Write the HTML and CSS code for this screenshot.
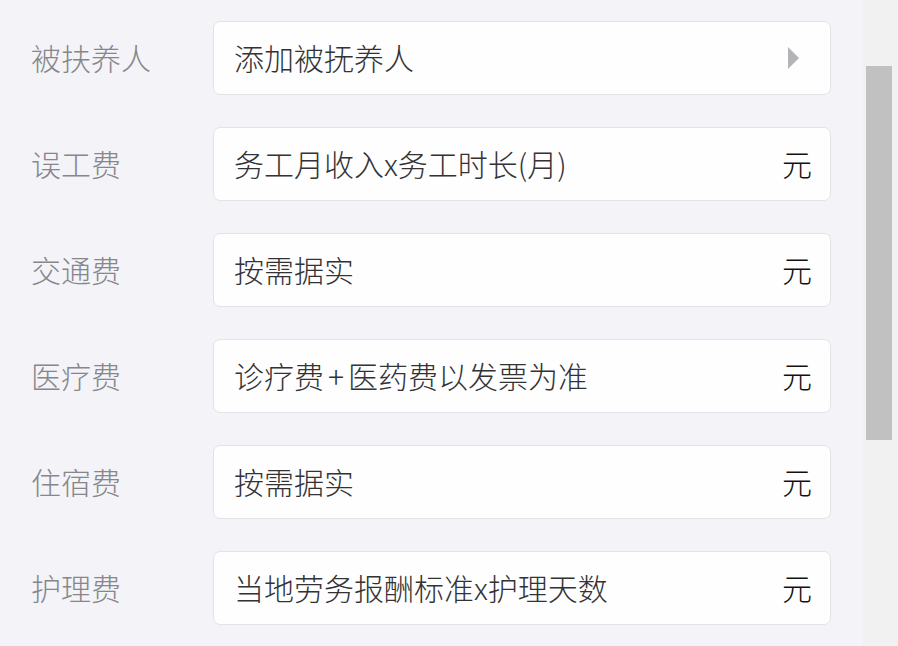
FILE: index.html
```html
<!DOCTYPE html>
<html lang="zh-CN">
<head>
<meta charset="utf-8">
<title>费用</title>
<link rel="stylesheet" href="styles.css">
</head>
<body>
<div class="page">
  <div class="form">
    <div class="row">
      <div class="label">被扶养人</div>
      <div class="field">
        <span class="value">添加被抚养人</span>
        <svg class="arrow" width="11" height="22" viewBox="0 0 11 22"><polygon points="0,0 11,11 0,22" fill="#b4b4b8"/></svg>
      </div>
    </div>
    <div class="row">
      <div class="label">误工费</div>
      <div class="field"><span class="value">务工月收入x务工时长(月)</span><span class="unit">元</span></div>
    </div>
    <div class="row">
      <div class="label">交通费</div>
      <div class="field"><span class="value">按需据实</span><span class="unit">元</span></div>
    </div>
    <div class="row">
      <div class="label">医疗费</div>
      <div class="field"><span class="value">诊疗费<span class="op">+</span>医药费以发票为准</span><span class="unit">元</span></div>
    </div>
    <div class="row">
      <div class="label">住宿费</div>
      <div class="field"><span class="value">按需据实</span><span class="unit">元</span></div>
    </div>
    <div class="row">
      <div class="label">护理费</div>
      <div class="field"><span class="value">当地劳务报酬标准x护理天数</span><span class="unit">元</span></div>
    </div>
  </div>
  <div class="scrollbar"><div class="thumb"></div></div>
</div>
</body>
</html>
```

FILE: styles.css
```css
html, body {
  margin: 0;
  padding: 0;
  height: 100%;
  overflow: hidden;
}
body {
  background: #f3f3f8;
  font-family: "Noto Sans CJK SC", "Noto Sans", sans-serif;
  font-weight: 300;
}
.page {
  display: flex;
  width: 898px;
  height: 646px;
}
.form {
  width: 863px;
  padding-top: 21px;
  display: flex;
  flex-direction: column;
  gap: 32px;
}
.row {
  display: flex;
  align-items: center;
  height: 74px;
}
.label {
  width: 182px;
  padding-left: 31px;
  padding-bottom: 3px;
  font-size: 30px;
  color: #86868b;
  line-height: 1;
}
.field {
  box-sizing: border-box;
  width: 618px;
  height: 74px;
  background: #fefefe;
  border: 1px solid #e2e2e8;
  border-radius: 7px;
  display: flex;
  align-items: center;
  justify-content: space-between;
  padding: 0 18px 3px 20px;
}
.value {
  font-size: 30px;
  color: #333335;
  line-height: 1;
}
.op {
  margin: 0 4px;
}
.unit {
  font-size: 30px;
  color: #111111;
  line-height: 1;
}
.arrow {
  margin-right: 13px;
  margin-top: 3px;
}
.scrollbar {
  width: 35px;
  height: 646px;
  background: #f1f1f2;
  padding: 66px 6px 0 3px;
  box-sizing: border-box;
}
.thumb {
  width: 26px;
  height: 374px;
  background: #c1c1c1;
}
```
